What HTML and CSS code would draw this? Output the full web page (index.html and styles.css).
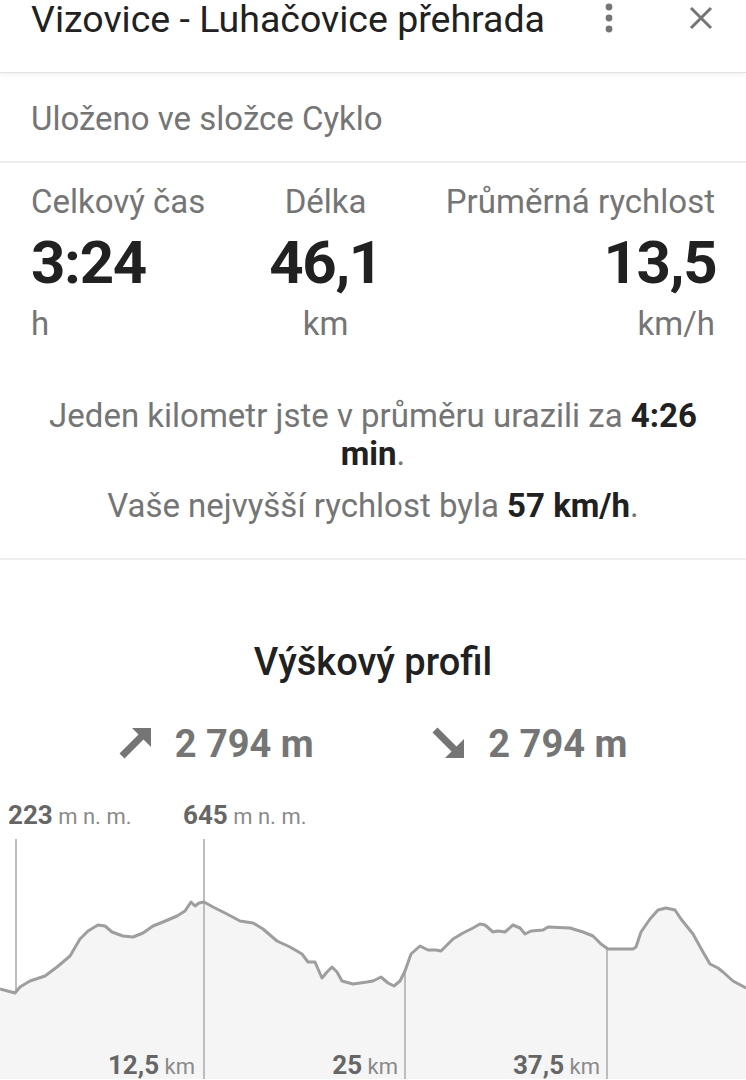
FILE: index.html
```html
<!DOCTYPE html>
<html lang="cs">
<head>
  <meta charset="UTF-8" />
  <meta name="viewport" content="width=device-width, initial-scale=1.0" />
  <title>Vizovice - Luhačovice přehrada</title>
  <link rel="stylesheet" href="styles.css">
</head>
<body>
  <header class="topbar">
    <h1 class="title">Vizovice - Luhačovice přehrada</h1>
    <div class="actions">
      <svg class="icon" width="24" height="40" viewBox="0 0 24 40">
        <circle cx="12" cy="7" r="3.4" fill="#757575"/>
        <circle cx="12" cy="18" r="3.4" fill="#757575"/>
        <circle cx="12" cy="29" r="3.4" fill="#757575"/>
      </svg>
      <svg class="icon" width="24" height="40" viewBox="0 0 24 40">
        <path d="M2 8 L22 28 M22 8 L2 28" stroke="#757575" stroke-width="3" fill="none"/>
      </svg>
    </div>
  </header>

  <section class="folder">Uloženo ve složce Cyklo</section>

  <section class="stats">
    <div class="stat">
      <div class="stat-label">Celkový čas</div>
      <div class="stat-value">3:24</div>
      <div class="stat-unit">h</div>
    </div>
    <div class="stat stat-mid">
      <div class="stat-label">Délka</div>
      <div class="stat-value">46,1</div>
      <div class="stat-unit">km</div>
    </div>
    <div class="stat stat-right">
      <div class="stat-label">Průměrná rychlost</div>
      <div class="stat-value">13,5</div>
      <div class="stat-unit">km/h</div>
    </div>
  </section>

  <section class="summary">
    <p>Jeden kilometr jste v průměru urazili za <b>4:26 min</b>.</p>
    <p>Vaše nejvyšší rychlost byla <b>57 km/h</b>.</p>
  </section>

  <section class="profile">
    <h2 class="profile-title">Výškový profil</h2>

    <div class="climb">
      <div class="climb-item">
        <svg class="arrow" width="32" height="32" viewBox="0 0 32 32">
          <polygon points="13,1 32,1 32,20" fill="#757575"/>
          <line x1="3" y1="29" x2="24" y2="8" stroke="#757575" stroke-width="7"/>
        </svg>
        <span>2 794 m</span>
      </div>
      <div class="climb-item">
        <svg class="arrow" width="32" height="32" viewBox="0 0 32 32">
          <polygon points="32,12 32,31 13,31" fill="#757575"/>
          <line x1="3" y1="3" x2="24" y2="24" stroke="#757575" stroke-width="7"/>
        </svg>
        <span>2 794 m</span>
      </div>
    </div>

    <div class="chart">
      <svg class="chart-svg" width="746" height="315" viewBox="0 765 746 315">
        <polygon class="area" points="0,990 15,994 20,988 30,982 45,977 57,968 70,957 80,940 88,932 98,926 105,927 112,933 123,937 133,938 143,934 153,927 163,923 177,917 185,912 191,903 195,907 199,904 204,903 213,908 227,915 240,922 253,924 263,930 277,942 290,948 302,955 308,963 315,963 318,970 322,979 327,973 332,968 337,973 342,982 353,985 367,983 373,982 381,978 388,984 394,987 400,982 405,972 411,955 420,947 428,951 436,951 441,952 453,940 463,934 473,929 480,925 485,926 493,933 498,932 505,933 513,926 520,929 525,935 531,932 543,931 548,928 570,929 583,933 593,937 601,945 608,950 633,950 636,948 641,933 650,920 658,911 666,909 675,911 681,920 693,935 703,953 710,965 718,969 723,973 733,982 746,989 746,1080 0,1080"/>
        <line class="grid" x1="16" y1="840" x2="16" y2="994"/>
        <line class="grid" x1="204" y1="840" x2="204" y2="1080"/>
        <line class="grid" x1="405" y1="972" x2="405" y2="1080"/>
        <line class="grid" x1="607" y1="950" x2="607" y2="1080"/>
        <polyline class="line" points="0,990 15,994 20,988 30,982 45,977 57,968 70,957 80,940 88,932 98,926 105,927 112,933 123,937 133,938 143,934 153,927 163,923 177,917 185,912 191,903 195,907 199,904 204,903 213,908 227,915 240,922 253,924 263,930 277,942 290,948 302,955 308,963 315,963 318,970 322,979 327,973 332,968 337,973 342,982 353,985 367,983 373,982 381,978 388,984 394,987 400,982 405,972 411,955 420,947 428,951 436,951 441,952 453,940 463,934 473,929 480,925 485,926 493,933 498,932 505,933 513,926 520,929 525,935 531,932 543,931 548,928 570,929 583,933 593,937 601,945 608,950 633,950 636,948 641,933 650,920 658,911 666,909 675,911 681,920 693,935 703,953 710,965 718,969 723,973 733,982 746,989"/>
      </svg>

      <div class="pt" style="left:8px;top:36px"><strong>223</strong> m n. m.</div>
      <div class="pt" style="left:183px;top:36px"><strong>645</strong> m n. m.</div>

      <div class="pt" style="right:551px;top:286px"><strong>12,5</strong> km</div>
      <div class="pt" style="right:348px;top:286px"><strong>25</strong> km</div>
      <div class="pt" style="right:146px;top:286px"><strong>37,5</strong> km</div>
    </div>
  </section>
</body>
</html>
```

FILE: styles.css
```css
body   { margin: 0; font-family: Roboto, "Noto Sans", sans-serif; background: #fff; color: #212121; }

/* header */
.topbar {
  display: flex; align-items: flex-start; height: 72px;
  padding: 0 33px 0 31px; position: relative;
  box-shadow: 0 1px 0 #e2e2e2, 0 3px 6px rgba(0,0,0,.06);
}
.title  {
  flex: 1; margin: 0; font-size: 37.5px; font-weight: 400;
  line-height: 38px; white-space: nowrap; color: #212121;
}
.actions { display: flex; gap: 68px; }
.icon   { display: block; }

.folder {
  padding: 27px 31px 22px; font-size: 33px; line-height: 40px;
  color: #757575; border-bottom: 2px solid #eeeeee;
}

/* stats */
.stats  { display: flex; justify-content: space-between; padding: 19px 31px 0; }
.stat-label, .stat-unit { font-size: 33px; line-height: 40px; color: #757575; }
.stat-value {
  font-size: 60px; font-weight: 700; line-height: 82px;
  letter-spacing: -1.3px; color: #212121;
}
.stat-mid   { text-align: center; }
.stat-right { text-align: right; }
.stat-right .stat-value { margin-right: -1.3px; }

.summary {
  padding: 53px 31px 33px; text-align: center;
  font-size: 33px; line-height: 38px; color: #757575;
  border-bottom: 2px solid #eeeeee;
}
.summary p     { margin: 0; }
.summary p + p { margin-top: 14px; }
.summary b     { color: #212121; font-weight: 700; }

/* elevation profile */
.profile-title {
  margin: 0; padding-top: 82px; text-align: center;
  font-size: 38px; font-weight: 500; line-height: 40px; color: #212121;
}
.climb {
  display: flex; justify-content: space-evenly; margin-top: 42px;
  font-size: 38px; font-weight: 700; line-height: 40px; color: #757575;
}
.climb-item { display: flex; align-items: flex-start; gap: 24px; }
.arrow  { display: block; margin-top: 3px; }

.chart  { position: relative; height: 315px; overflow: hidden; }
.chart-svg { position: absolute; left: 0; top: 0; }
.area   { fill: #f5f5f5; }
.line   { fill: none; stroke: #9e9e9e; stroke-width: 3; stroke-linejoin: round; }
.grid   { stroke: #bdbdbd; stroke-width: 2; }

.pt     { position: absolute; font-size: 22px; line-height: 30px; color: #8a8a8a; white-space: nowrap; }
.pt strong { font-size: 26px; font-weight: 700; color: #666; }
```
